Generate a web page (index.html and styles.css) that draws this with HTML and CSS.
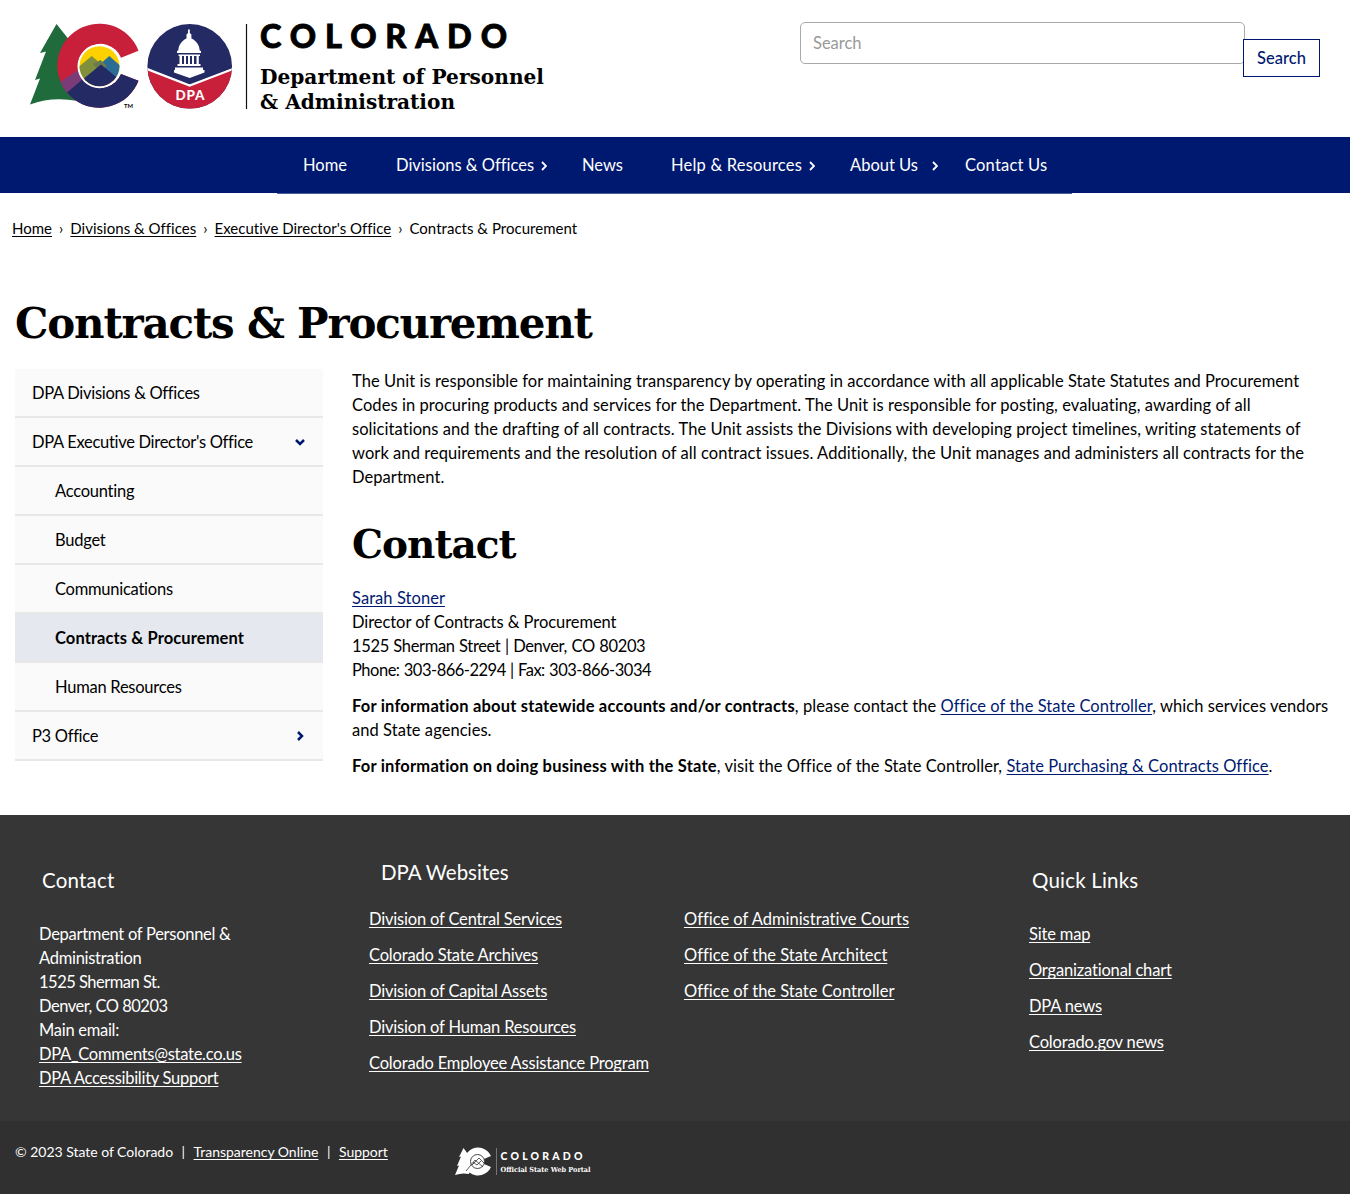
FILE: index.html
```html
<!DOCTYPE html>
<html lang="en">
<head>
<meta charset="utf-8">
<title>Contracts &amp; Procurement</title>
<link rel="stylesheet" href="styles.css">
</head>
<body>
<header class="site-header">
  <svg class="logo" viewBox="30 12 526 102" role="img" aria-label="Colorado Department of Personnel and Administration">
    <defs>
      <clipPath id="c-shape"><path d="M138.500 50.700A42 42 0 1 0 138.500 80.700L121 74A22 22 0 1 1 121 57.700Z"/></clipPath>
      <clipPath id="c-disc"><circle cx="99.500" cy="66.200" r="20"/></clipPath>
      <clipPath id="seal"><circle cx="189.700" cy="66.300" r="42.300"/></clipPath>
    </defs>
    <path fill="#1f6b3b" d="M56.500 24L40 53L46 51.500L35 80L40 78.500L30 104.500Q52 96 78 101L90 66Z"/>
    <g clip-path="url(#c-shape)">
      <path fill="#c8203a" d="M55 20H142V112H55Z"/>
      <path fill="#7b3b78" d="M55 85L80 69L92 80L66 102Z"/>
      <path fill="#232a64" d="M64 95L96 68L145 66V112H75Z"/>
    </g>
    <circle cx="99.500" cy="66.200" r="22" fill="#fff"/>
    <g clip-path="url(#c-disc)">
      <path fill="#fdd000" d="M78 44H122V88H78Z"/>
      <path fill="#7f8f3c" d="M76 69L91.700 56L108 70L86 88H76Z"/>
      <path fill="#2a6e96" d="M98 66L109.300 56L124 69V80H98Z"/>
      <path fill="#697b4c" d="M93 64L100.500 60L107 66L100 72Z"/>
      <path fill="#232a64" d="M76 88L82 80L101 64.500L122 82V90H76Z"/>
    </g>
    <text class="logo-tm" x="124" y="108" textLength="9" lengthAdjust="spacingAndGlyphs">TM</text>
    <g clip-path="url(#seal)">
      <path fill="#232a64" d="M145 20H235V112H145Z"/>
      <path fill="#c8203a" stroke="#fff" stroke-width="2.200" d="M143 67.500L189.700 85.500L237 67.500V115H143Z"/>
    </g>
    <g fill="#fff">
      <path d="M188 29.500H189.800V33L191.400 34.500V38.500C196 40.500 199.500 45 199.700 50.500L201 51V53H177V51L178.300 50.500C178.500 45 182 40.500 186.500 38.500V34.500L188 33Z"/>
      <path d="M178.500 54.500H200V56H198.800V64H200.500V66H177.500V64H179.500V56H178.500ZM182 56V64H184V56ZM186 56V64H188V56ZM190 56V64H192V56ZM194 56V64H196.500V56Z" fill-rule="evenodd"/>
      <path d="M175 67.500H203V70H204.500V72.500L189.700 78L174 72.500V70H175Z"/>
    </g>
    <text class="logo-dpa" x="175.500" y="100" textLength="29" lengthAdjust="spacing">DPA</text>
    <path d="M246.500 24V109" stroke="#111" stroke-width="1.200"/>
    <text class="logo-state" x="260" y="48" textLength="247">COLORADO</text>
    <text class="logo-dept" x="260" y="83.500" textLength="284" lengthAdjust="spacingAndGlyphs">Department of Personnel</text>
    <text class="logo-dept" x="260" y="108.500" textLength="195" lengthAdjust="spacingAndGlyphs">&amp; Administration</text>
  </svg>
  <form class="search">
    <input class="search-input" type="text" placeholder="Search" aria-label="Search">
    <button class="search-button" type="button">Search</button>
  </form>
</header>

<nav class="main-nav">
  <ul class="nav-list">
    <li>Home</li>
    <li>Divisions &amp; Offices<svg class="nav-arrow" viewBox="0 0 6 10"><path d="M1 1L5 5L1 9"/></svg></li>
    <li>News</li>
    <li class="wide">Help &amp; Resources<svg class="nav-arrow" viewBox="0 0 6 10"><path d="M1 1L5 5L1 9"/></svg></li>
    <li>About Us<svg class="nav-arrow nav-arrow-far" viewBox="0 0 6 10"><path d="M1 1L5 5L1 9"/></svg></li>
    <li class="wide">Contact Us</li>
  </ul>
</nav>

<div class="breadcrumb">
  <a href="#">Home</a><span>›</span><a href="#">Divisions &amp; Offices</a><span>›</span><a href="#">Executive Director's Office</a><span>›</span>Contracts &amp; Procurement
</div>

<h1 class="page-title">Contracts &amp; Procurement</h1>

<div class="columns">
  <ul class="side-menu">
    <li>DPA Divisions &amp; Offices</li>
    <li>DPA Executive Director's Office<svg class="side-arrow" viewBox="0 0 12 12"><path d="M2 4L6 8L10 4"/></svg></li>
    <li class="sub">Accounting</li>
    <li class="sub">Budget</li>
    <li class="sub">Communications</li>
    <li class="sub active">Contracts &amp; Procurement</li>
    <li class="sub">Human Resources</li>
    <li>P3 Office<svg class="side-arrow" viewBox="0 0 12 12"><path d="M4 2L8 6L4 10"/></svg></li>
  </ul>
  <main class="content">
    <p class="intro">The Unit is responsible for maintaining transparency by operating in accordance with all applicable State Statutes and Procurement Codes in procuring products and services for the Department. The Unit is responsible for posting, evaluating, awarding of all solicitations and the drafting of all contracts. The Unit assists the Divisions with developing project timelines, writing statements of work and requirements and the resolution of all contract issues. Additionally, the Unit manages and administers all contracts for the Department.</p>
    <h2 class="section-title">Contact</h2>
    <p><a href="#">Sarah Stoner</a><br><span class="role">Director of Contracts &amp; Procurement</span><br><span class="address">1525 Sherman Street | Denver, CO 80203</span><br><span class="phone">Phone: 303-866-2294 | Fax: 303-866-3034</span></p>
    <p><strong>For information about statewide accounts and/or contracts</strong>, please contact the <a href="#">Office of the State Controller</a>, which services vendors and State agencies.</p>
    <p><strong>For information on doing business with the State</strong>, visit the Office of the State Controller, <a href="#">State Purchasing &amp; Contracts Office</a>.</p>
  </main>
</div>

<footer class="site-footer">
  <section class="footer-contact">
    <h3>Contact</h3>
    <p>Department of Personnel &amp;<br>Administration<br><span class="address">1525 Sherman St.<br>Denver, CO 80203</span><br>Main email:<br><a href="#">DPA_Comments@state.co.us</a><br><a href="#">DPA Accessibility Support</a></p>
  </section>
  <section class="footer-sites">
    <h3>DPA Websites</h3>
    <div class="site-lists">
      <ul>
        <li><a href="#">Division of Central Services</a></li>
        <li><a href="#">Colorado State Archives</a></li>
        <li><a href="#">Division of Capital Assets</a></li>
        <li><a href="#">Division of Human Resources</a></li>
        <li><a href="#">Colorado Employee Assistance Program</a></li>
      </ul>
      <ul class="offices">
        <li><a href="#">Office of Administrative Courts</a></li>
        <li><a href="#">Office of the State Architect</a></li>
        <li><a href="#">Office of the State Controller</a></li>
      </ul>
    </div>
  </section>
  <section class="footer-links">
    <h3>Quick Links</h3>
    <ul>
      <li><a href="#">Site map</a></li>
      <li><a href="#">Organizational chart</a></li>
      <li><a href="#">DPA news</a></li>
      <li><a href="#">Colorado.gov news</a></li>
    </ul>
  </section>
</footer>
<div class="legal">
  <div class="legal-text">© 2023 State of Colorado<span>|</span><a href="#">Transparency Online</a><span>|</span><a href="#">Support</a></div>
  <svg class="portal-logo" viewBox="0 0 146 30" role="img" aria-label="Colorado Official State Web Portal">
    <path fill="#fff" d="M8.500 1L4 10L6 9.500L2 19L4 18.500L0 28Q7 25.500 14 27L18 14Z"/>
    <path fill="#fff" d="M36 9A14 14 0 1 0 36 20L29 17V12Z"/>
    <circle cx="22.500" cy="14.500" r="7" fill="#fff" stroke="#333" stroke-width=".9"/>
    <path d="M11 24L20 13L28 20M17 18L24 11L29 16M18 15L22 18L26 14" fill="none" stroke="#333" stroke-width=".8"/>
    <path d="M41.500 1V28" stroke="#888" stroke-width=".8"/>
    <text class="portal-state" x="45.500" y="12.500" textLength="82">COLORADO</text>
    <text class="portal-name" x="45.500" y="24.500" textLength="90" lengthAdjust="spacingAndGlyphs">Official State Web Portal</text>
  </svg>
</div>
</body>
</html>
```

FILE: styles.css
```css
* { box-sizing: border-box; }
body {
  margin: 0;
  background: #fff;
  color: #000;
  font: 16.500px/24px Lato, "Open Sans", sans-serif;
  font-variant-ligatures: none;
  letter-spacing: .06px;
}
ul { list-style: none; margin: 0; padding: 0; }
p { margin: 0 0 12px; }
a { color: inherit; text-underline-offset: 2px; text-decoration-skip-ink: none; }

.site-header {
  display: flex;
  justify-content: space-between;
  height: 137px;
  padding: 12px 30px 0;
}
.logo { width: 526px; height: 102px; }
.logo text { letter-spacing: 0; }
.logo-tm { font: 700 5px Lato, sans-serif; }
.logo-dpa { font: 900 13.500px Lato, sans-serif; fill: #fff; }
.logo-state { font: 900 32.500px Lato, sans-serif; stroke: #000; stroke-width: .8px; }
.logo-dept { font: 700 21px "DejaVu Serif", serif; }

.search { display: flex; align-items: flex-start; padding-top: 10px; }
.search-input {
  width: 445px;
  height: 42px;
  padding: 0 12px;
  border: 1px solid #aaa;
  border-radius: 5px;
  font: 16.500px Lato, sans-serif;
}
.search-input::placeholder { color: #999; opacity: 1; }
.search-button {
  width: 77px;
  height: 38px;
  margin: 17px 0 0 -2px;
  padding: 0;
  border: 1px solid #001970;
  background: #fff;
  color: #001970;
  font: 500 16.500px Lato, sans-serif;
}

.main-nav { height: 56px; background: #001970; color: #fff; }
.nav-list {
  display: grid;
  grid-template-columns: 93px 186px 89px 179px 115px 83px;
  width: 795px;
  height: 57px;
  margin-left: 277px;
  padding-left: 26px;
  border-bottom: 1px solid #4a5c9c;
  line-height: 56px;
  letter-spacing: 0;
  white-space: nowrap;
}
.nav-list .wide { letter-spacing: .2px; }
.nav-arrow {
  width: 6px;
  height: 10px;
  margin-left: 7px;
  vertical-align: 0;
  fill: none;
  stroke: #fff;
  stroke-width: 1.800;
}
.nav-arrow-far { margin-left: 14px; }

.breadcrumb { padding: 23px 12px 0; font-size: 15px; letter-spacing: .02px; white-space: nowrap; }
.breadcrumb span { margin: 0 7px; }

.page-title, .section-title {
  font-family: "DejaVu Serif", serif;
  font-weight: 700;
}
.page-title {
  margin: 57px 15px 18px;
  font-size: 42px;
  line-height: 54px;
  letter-spacing: -1.200px;
}

.columns { display: flex; gap: 29px; padding-left: 15px; height: 446px; }
.side-menu { width: 308px; flex: none; letter-spacing: -.3px; }
.side-menu li {
  display: flex;
  align-items: center;
  justify-content: space-between;
  height: 49px;
  padding: 0 17px;
  background: #fafafa;
  border-bottom: 2px solid #e8e8e8;
}
.side-menu .sub { padding-left: 40px; letter-spacing: -.25px; }
.side-menu .active { background: #e5e8ee; font-weight: 700; letter-spacing: .1px; }
.side-arrow { width: 12px; height: 12px; fill: none; stroke: #001970; stroke-width: 2.500; }
.content { width: 983px; }
.content a { color: #001970; }
.content strong { letter-spacing: .2px; }
.content .role { letter-spacing: -.06px; }
.content .address { letter-spacing: -.35px; word-spacing: .6px; }
.content .phone { letter-spacing: -.5px; word-spacing: .6px; }
.intro { margin-bottom: 30px; }
.section-title {
  margin: 0 0 17px;
  font-size: 39px;
  line-height: 50px;
  letter-spacing: -1px;
}

.site-footer {
  display: grid;
  grid-template-columns: 369px 660px 1fr;
  height: 306px;
  background: #363636;
  color: #fff;
  letter-spacing: -.18px;
}
.site-footer h3 { margin: 0; font-size: 20.500px; font-weight: 400; line-height: 26px; letter-spacing: .2px; }
.footer-contact { padding: 52px 0 0 39px; }
.footer-contact p { letter-spacing: -.28px; }
.footer-contact .address { letter-spacing: -.5px; }
.footer-contact h3, .footer-links h3 { padding-left: 3px; margin-bottom: 29px; }
.footer-sites { padding-top: 44px; }
.footer-sites h3 { padding-left: 12px; margin-bottom: 22px; letter-spacing: -.05px; }
.site-lists { display: grid; grid-template-columns: 315px 1fr; }
.site-footer li { height: 36px; }
.site-footer .offices { letter-spacing: 0; }
.footer-links { padding-top: 52px; }

.legal {
  display: flex;
  height: 73px;
  padding: 19px 15px 0;
  background: #303030;
  color: #fff;
  font-size: 14px;
  letter-spacing: -.02px;
}
.legal-text { width: 440px; white-space: nowrap; }
.legal-text span { margin: 0 8.500px; }
.portal-logo { width: 146px; height: 30px; margin-top: 7px; }
.portal-logo text { fill: #fff; letter-spacing: 0; }
.portal-state { font: 900 10.500px Lato, sans-serif; }
.portal-name { font: 700 7px "DejaVu Serif", serif; }
```
